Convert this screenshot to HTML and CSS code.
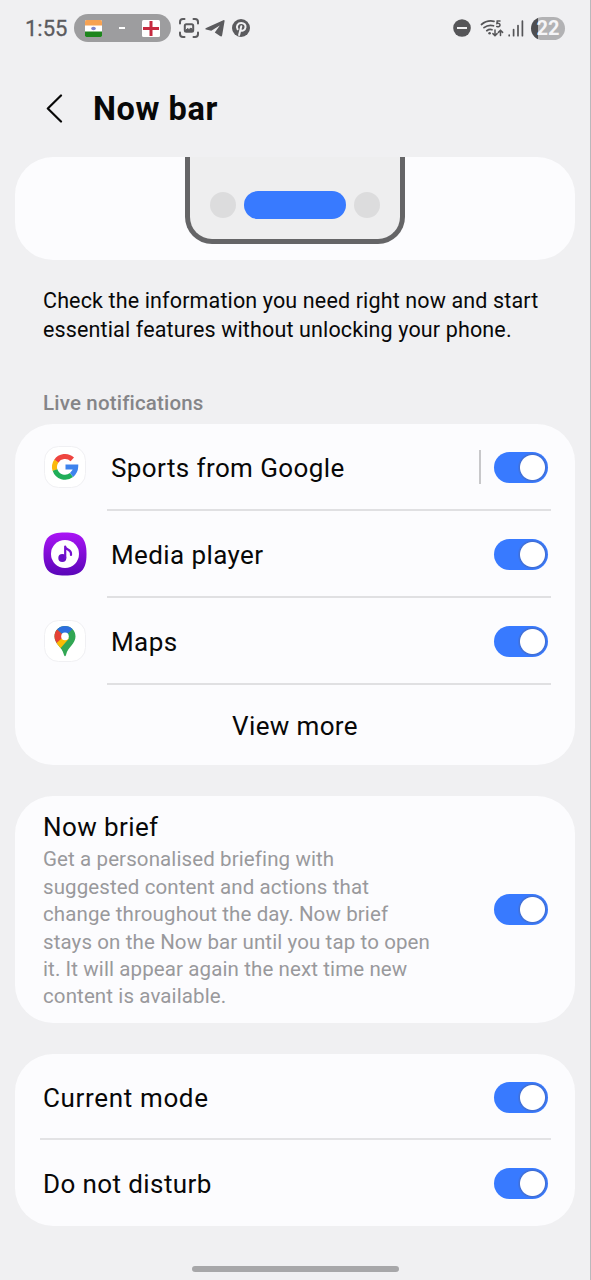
FILE: index.html
```html
<!DOCTYPE html>
<html lang="en">
<head>
<meta charset="utf-8">
<title>Now bar</title>
<link rel="stylesheet" href="styles.css">
</head>
<body>
<div class="screen">
  <div class="status">
    <span class="clock">1:55</span>
    <div class="live-pill">
      <svg width="17" height="17" viewBox="0 0 17 17"><rect width="17" height="17" rx="1.5" fill="#fff"/><path d="M0 5.5V1.5Q0 0 1.500 0H15.500Q17 0 17 1.500V5.500Z" fill="#f7a252"/><path d="M0 11.500H17V15.500Q17 17 15.500 17H1.500Q0 17 0 15.500Z" fill="#1d851d"/><ellipse cx="8.500" cy="8.500" rx="2.300" ry="1.700" fill="#7c83cf"/></svg>
      <span class="dash"></span>
      <svg width="18" height="17" viewBox="0 0 18 17"><rect width="18" height="17" rx="1.500" fill="#fff"/><path d="M9 1V16M1 8.500H17" stroke="#c62a40" stroke-width="3"/></svg>
    </div>
    <svg class="capture" width="20" height="20" viewBox="0 0 20 20" fill="none" stroke="#5b5b5e" stroke-width="2" stroke-linecap="round"><path d="M1 5.500V4Q1 1 4 1H5.500M14.500 1H16Q19 1 19 4V5.500M19 14.500V16Q19 19 16 19H14.500M5.500 19H4Q1 19 1 16V14.500"/><rect x="5.800" y="6.300" width="8.400" height="7.400" rx="1.500"/><path d="M6.500 12.500L8.500 10.500L10 11.500L12 10L13.500 12V13H6.500Z" fill="#5b5b5e" stroke-width="1"/></svg>
    <svg class="telegram" width="20" height="18" viewBox="0 0 20 18" fill="#5b5b5e"><path d="M18.300 1.200Q19.900.7 19.500 2.500L17.200 16Q16.800 18.300 15 17.100L9.800 13.400L14.800 6.400L6.300 11.700L1 10.500Q-.5 9.800 1.100 8.900Z"/></svg>
    <svg class="pinterest" width="18" height="18" viewBox="0 0 18 18"><circle cx="9" cy="9" r="9" fill="#5b5b5e"/><path d="M5.600 10.200C3.700 7.100 5.800 4 9.300 4C12.100 4 13.900 5.800 13.500 8.300C13 11.500 10.200 12.600 8.500 10.800M9.300 7.200L7.100 16" fill="none" stroke="#f1f1f3" stroke-width="2" stroke-linecap="round"/></svg>
    <div class="status-right">
      <svg width="18" height="18" viewBox="0 0 18 18"><circle cx="9" cy="9" r="8.800" fill="#555558"/><path d="M4 9H14" stroke="#f1f1f3" stroke-width="2"/></svg>
      <svg class="wifi" width="24" height="19" viewBox="0 0 24 19" fill="none" stroke="#555558" stroke-width="1.700" stroke-linecap="round"><path d="M1.500 5.500Q7 .8 14 2.300M4 8.700Q8.300 5.300 13.500 6.800M6.800 11.700Q9.300 9.800 12 10.700"/><circle cx="9.600" cy="14.300" r="1.300" fill="#555558" stroke="none"/><path d="M15 11V16.500M12.900 14.600L15 16.700L17.100 14.600M20.500 16.500V11.500M18.400 13.400L20.500 11.300L22.600 13.400" stroke-width="1.500"/><path d="M20 2H17.200L16.900 4.500Q20 3.900 20 6.100Q19.800 8.200 16.700 7.500" stroke-width="1.500"/></svg>
      <svg class="signal" width="16" height="17" viewBox="0 0 16 17" stroke="#555558" stroke-width="1.700" stroke-linecap="round"><path d="M1.200 15.200V15.700M5.600 9.500V15.700M10 5.500V15.700M14.400 1.200V15.700"/></svg>
      <div class="battery">22</div>
    </div>
  </div>

  <header class="header">
    <svg width="17" height="30" viewBox="0 0 17 30" fill="none" stroke="#080808" stroke-width="2.200" stroke-linecap="round" stroke-linejoin="round"><path d="M15 1.500L1.800 14.500L15 27.500"/></svg>
    <h1 class="title">Now bar</h1>
  </header>

  <section class="card preview">
    <div class="phone"><i class="dot"></i><i class="bar"></i><i class="dot"></i></div>
  </section>

  <p class="intro">Check the information you need right now and start<br>essential features without unlocking your phone.</p>
  <h2 class="label">Live notifications</h2>

  <section class="card live">
    <div class="row">
      <span class="app-icon"><svg width="42" height="42" viewBox="0 0 42 42" fill="none"><rect x=".5" y=".5" width="41" height="41" rx="14" fill="#fff" stroke="#f0f0f3"/><g stroke-width="5"><path d="M12.200 15.300A10.600 10.600 0 0 1 28.300 13.400" stroke="#ee4540"/><path d="M11 24.300A10.600 10.600 0 0 1 12.400 15" stroke="#fbb90c"/><path d="M27.500 29.100A10.600 10.600 0 0 1 11 24" stroke="#20ae58"/><path d="M21.500 21H31.700Q31.500 25.800 27.600 29" stroke="#3e83ed"/></g></svg></span>
      <span class="name">Sports from Google</span><i class="split"></i><i class="toggle"></i>
    </div>
    <div class="row">
      <span class="app-icon"><svg width="44" height="44" viewBox="0 0 44 44"><defs><linearGradient id="violet" x1="0" y1="0" x2="0" y2="1"><stop stop-color="#aa14f5"/><stop offset="1" stop-color="#5a06b8"/></linearGradient></defs><path d="M22 .5C38 .5 43.500 6 43.500 22S38 43.500 22 43.500S.5 38 .5 22S6 .5 22 .5Z" fill="url(#violet)"/><circle cx="22" cy="22" r="14" fill="#fff"/><circle cx="19.300" cy="26" r="4" fill="#6810c5"/><path d="M22.200 26V14.500C22.500 18 28 17 28 21.500V23" fill="none" stroke="#7510d0" stroke-width="2.200" stroke-linecap="round" stroke-linejoin="round"/></svg></span>
      <span class="name">Media player</span><i class="toggle"></i>
    </div>
    <div class="row">
      <span class="app-icon"><svg width="42" height="42" viewBox="0 0 42 42"><defs><clipPath id="pin"><path d="M21 6C15 6 10.500 10.500 10.500 16.500C10.500 24 18 26.500 20 35Q21 37.500 22 35C24 26.500 31.500 24 31.500 16.500C31.500 10.500 27 6 21 6Z"/></clipPath></defs><rect x=".5" y=".5" width="41" height="41" rx="14" fill="#fff" stroke="#f0f0f3"/><g clip-path="url(#pin)"><path d="M8 4H34V38H8Z" fill="#31a653"/><path d="M8 8L13 9.300L21 16.500L11.500 26.500H8Z" fill="#e54236"/><path d="M9 26L20.500 16L25 18.500L14.500 30.500Z" fill="#fabc05"/><path d="M12.800 9L21 16.500L29.500 8L25 3H15Z" fill="#2e6fdd"/></g><circle cx="21" cy="16.400" r="3.800" fill="#fff"/></svg></span>
      <span class="name">Maps</span><i class="toggle"></i>
    </div>
    <div class="more">View more</div>
  </section>

  <section class="card brief">
    <div class="brief-text">
      <h3 class="brief-title">Now brief</h3>
      <p class="desc">Get a personalised briefing with<br>suggested content and actions that<br>change throughout the day. Now brief<br>stays on the Now bar until you tap to open<br>it. It will appear again the next time new<br>content is available.</p>
    </div>
    <i class="toggle"></i>
  </section>

  <section class="card modes">
    <div class="mode"><span class="name current">Current mode</span><i class="toggle"></i></div>
    <div class="mode"><span class="name">Do not disturb</span><i class="toggle"></i></div>
  </section>
  <div class="home"></div>
</div>
</body>
</html>
```
FILE: styles.css
```css
* { box-sizing: border-box; }
body { margin: 0; background: #f0f0f2; color: #080808; font-family: Roboto, sans-serif; }
h1, h2, h3, p { margin: 0; font-weight: 400; }
svg { display: block; flex: none; }
.screen { display: flex; flex-direction: column; width: 591px; height: 1280px; padding: 0 15px; overflow: hidden; border-right: 1px solid #b9b9bc; }
.status { display: flex; align-items: center; height: 56px; flex: none; padding-left: 10px; }
.clock { width: 49px; font-size: 22px; font-weight: 400; color: #5b5b5e; white-space: nowrap; -webkit-text-stroke: .3px #5b5b5e; }
.live-pill { display: flex; align-items: center; justify-content: space-between; width: 97px; height: 28px; padding: 0 11px; border-radius: 14px; background: #9d9d9f; }
.dash { width: 6px; height: 2px; background: #fff; }
.capture { margin-left: 8px; }
.telegram { margin-left: 6px; }
.pinterest { margin-left: 7px; }
.status-right { display: flex; align-items: center; margin-left: auto; margin-right: 10px; }
.wifi { margin-left: 9px; }
.signal { margin-left: 4px; }
.battery { width: 34px; height: 23px; margin-left: 7px; border-radius: 12px; background: linear-gradient(90deg, #4d4d50 7px, #b2b2b4 7px); color: #f5f5f7; font-size: 20px; font-weight: 700; line-height: 23px; text-align: center; }
.header { display: flex; align-items: center; height: 101px; flex: none; padding-left: 31px; gap: 30px; }
.header svg { margin-top: 4px; }
.title { margin-top: 4px; font-size: 32.500px; font-weight: 700; letter-spacing: .6px; }
.card { flex: none; width: 560px; border-radius: 38px; background: #fcfcfe; }
.preview { display: flex; justify-content: center; height: 103px; }
.phone { display: flex; justify-content: space-between; width: 220px; height: 87px; padding: 34px 20px 0; border: 5px solid #656567; border-top: 0; border-radius: 0 0 27px 27px; background: #eeeeef; }
.dot { width: 26px; height: 26px; margin-top: 1px; border-radius: 50%; background: #dcdcdd; }
.bar { width: 102px; height: 28px; border-radius: 14px; background: #387aff; }
.intro { height: 57px; margin: 27px 0 0 28px; font-size: 21.500px; letter-spacing: .14px; line-height: 28.500px; white-space: nowrap; }
.label { margin: 45px 0 0 28px; height: 35px; color: #858588; font-size: 20.500px; font-weight: 500; letter-spacing: .18px; line-height: 28px; }
.live { height: 341px; }
.row { position: relative; display: flex; align-items: center; height: 87px; padding: 0 27px; }
.row::after { content: ""; position: absolute; left: 92px; right: 24px; bottom: 0; height: 2px; background: #e0e0e2; }
.app-icon { display: flex; justify-content: center; width: 45px; margin: -1px 24px 0 0; }
.name { font-size: 26px; letter-spacing: .4px; line-height: 32px; white-space: nowrap; }
.current { letter-spacing: .65px; }
.mode .name { padding-top: 1px; }
.toggle { flex: none; width: 54px; height: 31px; margin-left: auto; border-radius: 16px; background: radial-gradient(circle at 38.500px 15.500px, #fff 12px, #416fd4 13px, #387aff 15px); }
.split { width: 1.500px; height: 34px; margin: -1px 0 0 auto; background: #c8c8ca; }
.split + .toggle { margin-left: 13.500px; }
.more { display: flex; align-items: center; justify-content: center; height: 80px; padding-top: 1px; font-size: 26px; letter-spacing: .35px; }
.brief { display: flex; align-items: center; height: 227px; margin-top: 31px; padding: 0 27px 0 28px; }
.brief-title { font-size: 26px; letter-spacing: .4px; line-height: 34px; }
.brief-text { padding-top: 2px; }
.desc { padding-top: 2px; color: #99999c; font-size: 20.500px; letter-spacing: .11px; line-height: 27.350px; white-space: nowrap; }
.modes { height: 172px; margin-top: 31px; }
.mode { position: relative; display: flex; align-items: center; height: 86px; padding: 0 27px 0 28px; }
.mode:first-child::after { content: ""; position: absolute; left: 25px; right: 24px; bottom: 0; height: 2px; background: #e3e3e5; }
.home { flex: none; width: 207px; height: 6px; margin: 40px auto 0; border-radius: 3px; background: #a7a7a9; }
```
